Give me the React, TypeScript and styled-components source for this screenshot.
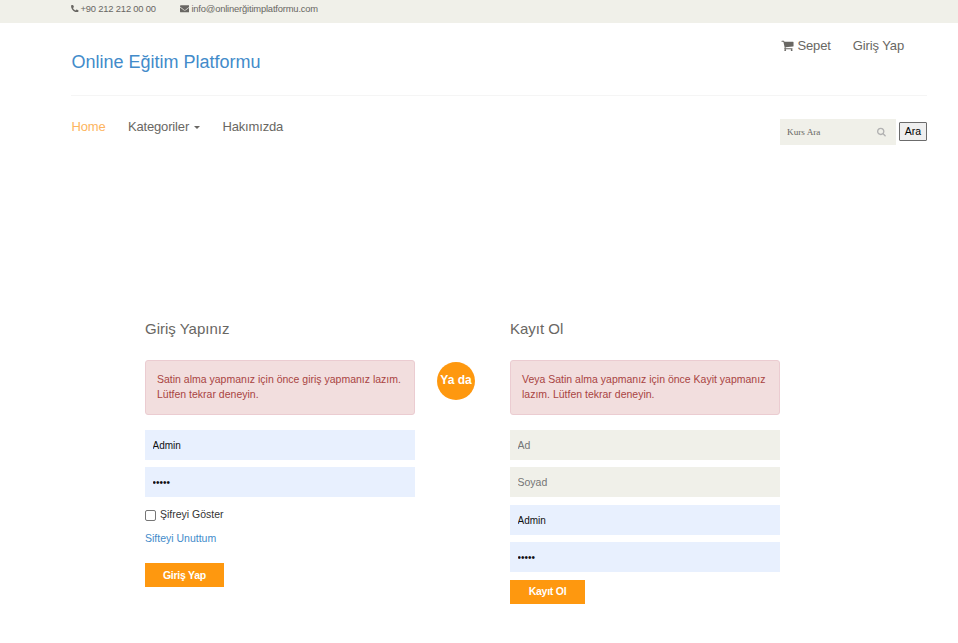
import React from "react";
import styled, { createGlobalStyle } from "styled-components";
import { FaPhoneAlt, FaEnvelope } from "react-icons/fa";

const GlobalStyle = createGlobalStyle`
  *, *::before, *::after { box-sizing: border-box; }
  body {
    margin: 0;
    background: #fff;
    color: #696763;
    font-family: "Liberation Sans", Arial, sans-serif;
    font-size: 10.5px;
    line-height: 15px;
    overflow: hidden;
  }
  a { text-decoration: none; color: inherit; }
  input, button { font-family: inherit; border-radius: 0; }
`;

const TopBar = styled.div`
  height: 23px;
  padding: 1px 0 0 71px;
  background: #f0f0e9;
  font-size: 9.4px;
  letter-spacing: -0.18px;
  line-height: 15px;
`;

const ContactList = styled.div`
  display: flex;
  align-items: center;
  gap: 24px;
  height: 15px;
`;

const Contact = styled.a`
  display: flex;
  align-items: center;
  gap: 2px;
  height: 15px;
  line-height: 14px;
`;

const Container = styled.div`
  margin: 0 31px 0 71px;
`;

const Header = styled.header`
  display: flex;
  justify-content: space-between;
  height: 73px;
  padding-right: 23px;
  border-bottom: 1px solid #f5f5f5;
`;

const Brand = styled.a`
  margin: 27px 0 0 0.5px;
  font-size: 18px;
  line-height: 24px;
  color: #428bca;
`;

const Account = styled.nav`
  display: flex;
  gap: 22px;
  margin-top: 13px;
  font-size: 13px;
  letter-spacing: -0.12px;
  line-height: 20px;
`;

const AccountLink = styled.a`
  display: flex;
  align-items: center;
  gap: 3px;
  height: 20px;
  svg { margin-bottom: 2px; }
`;

const NavRow = styled.div`
  display: flex;
  justify-content: space-between;
  padding-top: 20px;
`;

const Menu = styled.nav`
  display: flex;
  gap: 22.3px;
  margin: 1px 0 0 0.5px;
  font-size: 13px;
  letter-spacing: -0.15px;
  line-height: 20px;
`;

const MenuLink = styled.a<{ $active?: boolean }>`
  display: flex;
  align-items: center;
  height: 20px;
  color: ${(p) => (p.$active ? "#fdb45e" : "#696763")};
`;

const Caret = styled.span`
  margin: 1px 0 0 5px;
  border: 3px solid transparent;
  border-top-color: currentColor;
  border-bottom: 0;
`;

const Search = styled.form`
  display: flex;
  align-items: center;
  gap: 3px;
  margin-top: 3px;
  height: 26px;
`;

const SearchBox = styled.label`
  display: flex;
  align-items: center;
  width: 116px;
  height: 26px;
  padding: 0 9.5px 0 7px;
  background: #f0f0e9;
  color: #b2b2b2;
`;

const SearchInput = styled.input`
  flex: 1;
  min-width: 0;
  padding: 0;
  border: 0;
  outline: 0;
  background: transparent;
  font: 9.2px/14px "Liberation Serif", serif;
  &::placeholder { color: #696763; opacity: 1; }
`;

const SearchButton = styled.button`
  width: 28px;
  height: 19px;
  margin-bottom: 1px;
  padding: 0;
  border: 1px solid #6b6b6b;
  border-radius: 1px;
  background: #efefef;
  color: #000;
  font-size: 10.5px;
  line-height: 15px;
`;

const Forms = styled.main`
  display: grid;
  grid-template-columns: 270px 95px 270px;
  margin: 174px 0 0 145px;
`;

const Panel = styled.section`
  display: flex;
  flex-direction: column;
  align-items: flex-start;
`;

const Heading = styled.h2`
  margin: 0 0 22px;
  font-size: 15px;
  font-weight: 400;
  line-height: 19px;
`;

const Alert = styled.div`
  width: 270px;
  height: 55px;
  margin-bottom: 15px;
  padding: 11px;
  border: 1px solid #ebccd1;
  border-radius: 3px;
  background: #f2dede;
  color: #a94442;
  white-space: nowrap;
`;

const Field = styled.input<{ $filled?: boolean; $gap?: number }>`
  width: 270px;
  height: 30px;
  margin: 0 0 ${(p) => p.$gap ?? 7}px;
  padding: 0 8px 0 7.5px;
  border: 0;
  outline: 0;
  background: ${(p) => (p.$filled ? "#e8f0fe" : "#f0f0e9")};
  color: #111;
  font-size: ${(p) => (p.$filled ? "10px" : "10.5px")};
  &::placeholder { color: #757575; opacity: 1; }
`;

const Remember = styled.label`
  display: flex;
  align-items: center;
  gap: 4px;
  height: 15px;
  margin-top: 3px;
  color: #333;
`;

const Checkbox = styled.input`
  appearance: none;
  width: 11px;
  height: 11px;
  margin: 2px 0 0;
  border: 1px solid #767676;
  border-radius: 2px;
  background: #fff;
`;

const Forgot = styled.a`
  margin: 9px 0 17px;
  color: #428bca;
`;

const Submit = styled.button<{ $width: number; $lift?: number }>`
  width: ${(p) => p.$width}px;
  height: 24px;
  padding: 0 0 ${(p) => p.$lift ?? 0}px;
  border: 0;
  background: #fe980f;
  color: #fff;
  font-size: 10.5px;
  font-weight: 700;
  letter-spacing: -0.25px;
`;

const Divider = styled.div`
  padding: 43px 0 0 22px;
`;

const Or = styled.div`
  width: 38px;
  height: 38px;
  border-radius: 50%;
  background: #fe980f;
  color: #fff;
  font-size: 12px;
  font-weight: 700;
  line-height: 36px;
  text-align: center;
  white-space: nowrap;
`;

function CartIcon() {
  return (
    <svg width="13" height="13" viewBox="0 0 1792 1792" fill="currentColor">
      <path d="M704 1536q0 52-38 90t-90 38-90-38-38-90 38-90 90-38 90 38 38 90zm896 0q0 52-38 90t-90 38-90-38-38-90 38-90 90-38 90 38 38 90zm128-1088v512q0 24-16.500 42.500t-40.500 21.500l-1044 122q13 60 13 70 0 16-24 64h920q26 0 45 19t19 45-19 45-45 19h-1024q-26 0-45-19t-19-45q0-11 8-31.500t16-36 21.500-40 15.500-29.500l-177-823h-204q-26 0-45-19t-19-45 19-45 45-19h256q16 0 28.500 6.500t19.500 15.500 13 24.500 8 26 5.500 29.500 4.500 26h1201q26 0 45 19t19 45z" />
    </svg>
  );
}

function SearchIcon() {
  return (
    <svg width="9.500" height="9.500" viewBox="0 0 1792 1792" fill="currentColor">
      <path d="M1152 832q0-185-131.500-316.500T704 384 387.500 515.500 256 832t131.500 316.500T704 1280t316.500-131.500T1152 832zm512 832q0 52-38 90t-90 38q-54 0-90-38l-343-342q-179 124-399 124-143 0-273.500-55.500t-225-150-150-225T0 832t55.500-273.500 150-225 225-150T704 128t273.500 55.500 225 150 150 225T1408 832q0 220-124 399l343 343q37 37 37 90z" />
    </svg>
  );
}

export default function App() {
  return (
    <>
      <GlobalStyle />
      <TopBar>
        <ContactList>
          <Contact><FaPhoneAlt size={7.5} />+90 212 212 00 00</Contact>
          <Contact><FaEnvelope size={9.5} />info@onlinerğitimplatformu.com</Contact>
        </ContactList>
      </TopBar>
      <Container>
        <Header>
          <Brand>Online Eğitim Platformu</Brand>
          <Account>
            <AccountLink><CartIcon />Sepet</AccountLink>
            <AccountLink>Giriş Yap</AccountLink>
          </Account>
        </Header>
        <NavRow>
          <Menu>
            <MenuLink $active>Home</MenuLink>
            <MenuLink>Kategoriler<Caret /></MenuLink>
            <MenuLink>Hakımızda</MenuLink>
          </Menu>
          <Search>
            <SearchBox>
              <SearchInput placeholder="Kurs Ara" />
              <SearchIcon />
            </SearchBox>
            <SearchButton type="button">Ara</SearchButton>
          </Search>
        </NavRow>
      </Container>
      <Forms>
        <Panel>
          <Heading>Giriş Yapınız</Heading>
          <Alert>Satin alma yapmanız için önce giriş yapmanız lazım.<br />Lütfen tekrar deneyin.</Alert>
          <Field $filled defaultValue="Admin" />
          <Field $filled type="password" defaultValue="admin" />
          <Remember><Checkbox type="checkbox" />Şifreyi Göster</Remember>
          <Forgot>Sifteyi Unuttum</Forgot>
          <Submit $width={79}>Giriş Yap</Submit>
        </Panel>
        <Divider><Or>Ya da</Or></Divider>
        <Panel>
          <Heading>Kayıt Ol</Heading>
          <Alert>Veya Satin alma yapmanız için önce Kayit yapmanız<br />lazım. Lütfen tekrar deneyin.</Alert>
          <Field placeholder="Ad" />
          <Field placeholder="Soyad" $gap={8} />
          <Field $filled defaultValue="Admin" />
          <Field $filled type="password" defaultValue="admin" $gap={8} />
          <Submit $width={75} $lift={2}>Kayıt Ol</Submit>
        </Panel>
      </Forms>
    </>
  );
}
